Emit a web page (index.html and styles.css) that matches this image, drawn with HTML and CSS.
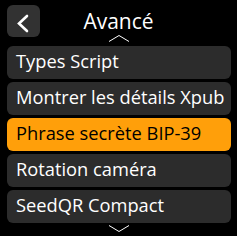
FILE: index.html
```html
<!DOCTYPE html>
<html lang="fr">
<head>
    <meta charset="UTF-8">
    <title>Avancé</title>
    <link rel="stylesheet" href="styles.css">
</head>
<body>
    <div class="screen">
        <div class="topbar">
            <div class="back-btn">
                <svg width="33" height="32" viewBox="0 0 33 32">
                    <path d="M20 11 L12 18.5 L20 26" fill="none" stroke="#fff" stroke-width="2.6" stroke-linecap="round" stroke-linejoin="miter"/>
                </svg>
            </div>
            <div class="title">Avancé</div>
            <div></div>
            <svg class="scroll-arrow up" width="20" height="7" viewBox="0 0 20 7">
                <path d="M0 6.5 L10 0.5 L20 6.5" fill="none" stroke="#fff" stroke-width="1"/>
            </svg>
        </div>
        <div class="menu">
            <div class="menu-item">Types Script</div>
            <div class="menu-item">Montrer les détails Xpub</div>
            <div class="menu-item selected">Phrase secrète BIP-39</div>
            <div class="menu-item">Rotation caméra</div>
            <div class="menu-item">SeedQR Compact</div>
        </div>
        <svg class="scroll-arrow down" width="20" height="7" viewBox="0 0 20 7">
            <path d="M0 0.5 L10 6.5 L20 0.5" fill="none" stroke="#fff" stroke-width="1"/>
        </svg>
    </div>
</body>
</html>
```

FILE: styles.css
```css
body, html {
    margin: 0;
    padding: 0;
    background-color: #000;
    color: #fff;
    font-family: "Open Sans", "Noto Sans", sans-serif;
}
.screen {
    width: 237px;
    height: 236px;
    position: relative;
    overflow: hidden;
}
.topbar {
    position: relative;
    height: 46px;
    box-sizing: border-box;
    padding: 5px 7px 0 7px;
    display: grid;
    grid-template-columns: 33px 1fr 33px;
    align-items: start;
}
.back-btn {
    width: 33px;
    height: 32px;
    border-radius: 6px;
    background-color: #323232;
}
.back-btn svg {
    display: block;
}
.title {
    font-size: 21px;
    line-height: 32px;
    text-align: center;
    white-space: nowrap;
}
.scroll-arrow {
    position: absolute;
    left: 109px;
    display: block;
}
.scroll-arrow.up {
    top: 35px;
}
.scroll-arrow.down {
    top: 225px;
}
.menu {
    display: flex;
    flex-direction: column;
    gap: 3px;
    padding: 0 6px 0 7px;
}
.menu-item {
    height: 33px;
    box-sizing: border-box;
    padding: 0 8px 0 9px;
    border-radius: 6px;
    background-color: #2c2c2c;
    font-size: 18.3px;
    line-height: 30px;
    white-space: nowrap;
    overflow: hidden;
}
.menu-item.selected {
    background-color: #ff9f0a;
    color: #000;
}
```
